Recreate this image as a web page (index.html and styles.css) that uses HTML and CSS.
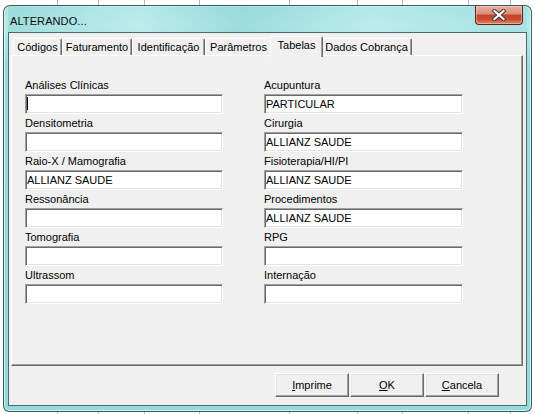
FILE: index.html
```html
<!DOCTYPE html>
<html>
<head>
<meta charset="utf-8">
<link rel="stylesheet" href="styles.css">
</head>
<body>
<div class="window">
  <div class="titlebar">
    <span class="title">ALTERANDO...</span>
    <div class="close">
      <svg width="14" height="12" viewBox="0 0 14 12">
        <path d="M2.5 2 L11.5 10 M11.5 2 L2.5 10" stroke="#3b3b3b" stroke-width="4.2" stroke-linecap="square" fill="none"/>
        <path d="M2.5 2 L11.5 10 M11.5 2 L2.5 10" stroke="#ffffff" stroke-width="2.2" stroke-linecap="square" fill="none"/>
      </svg>
    </div>
  </div>
  <div class="client">
    <div class="tabs">
      <div class="tab t1">Códigos</div>
      <div class="tab t2">Faturamento</div>
      <div class="tab t3">Identificação</div>
      <div class="tab t4">Parâmetros</div>
      <div class="tab t5 active">Tabelas</div>
      <div class="tab t6">Dados Cobrança</div>
    </div>
    <div class="panel">
      <div class="fields">
        <div class="field"><div class="label">Análises Clínicas</div><div class="input"><span class="caret"></span></div></div>
        <div class="field"><div class="label">Acupuntura</div><div class="input">PARTICULAR</div></div>
        <div class="field"><div class="label">Densitometria</div><div class="input"></div></div>
        <div class="field"><div class="label">Cirurgia</div><div class="input">ALLIANZ SAUDE</div></div>
        <div class="field"><div class="label">Raio-X / Mamografia</div><div class="input">ALLIANZ SAUDE</div></div>
        <div class="field"><div class="label">Fisioterapia/HI/PI</div><div class="input">ALLIANZ SAUDE</div></div>
        <div class="field"><div class="label">Ressonância</div><div class="input"></div></div>
        <div class="field"><div class="label">Procedimentos</div><div class="input">ALLIANZ SAUDE</div></div>
        <div class="field"><div class="label">Tomografia</div><div class="input"></div></div>
        <div class="field"><div class="label">RPG</div><div class="input"></div></div>
        <div class="field"><div class="label">Ultrassom</div><div class="input"></div></div>
        <div class="field"><div class="label">Internação</div><div class="input"></div></div>
      </div>
    </div>
    <div class="buttons">
      <div class="btn"><u>I</u>mprime</div>
      <div class="btn"><u>O</u>K</div>
      <div class="btn"><u>C</u>ancela</div>
    </div>
  </div>
</div>
</body>
</html>
```

FILE: styles.css
```css
html, body {
  margin: 0;
  padding: 0;
}
body {
  width: 535px;
  height: 414px;
  overflow: hidden;
  background-color: #ffffff;
  background-image:
    linear-gradient(to right, transparent 57px, #b8b8b8 57px, #b8b8b8 58px, transparent 58px),
    linear-gradient(to right, transparent 98px, #b8b8b8 98px, #b8b8b8 99px, transparent 99px),
    linear-gradient(to right, transparent 144px, #b8b8b8 144px, #b8b8b8 145px, transparent 145px),
    linear-gradient(to right, transparent 199px, #b8b8b8 199px, #b8b8b8 200px, transparent 200px),
    linear-gradient(to right, transparent 289px, #b8b8b8 289px, #b8b8b8 290px, transparent 290px),
    linear-gradient(to right, transparent 357px, #b8b8b8 357px, #b8b8b8 358px, transparent 358px),
    linear-gradient(to right, transparent 402px, #b8b8b8 402px, #b8b8b8 403px, transparent 403px),
    linear-gradient(to right, transparent 468px, #b8b8b8 468px, #b8b8b8 469px, transparent 469px),
    linear-gradient(to right, transparent 510px, #b8b8b8 510px, #b8b8b8 511px, transparent 511px);
  font-family: "Liberation Sans", Arial, sans-serif;
  font-size: 11px;
  color: #000;
  padding-top: 5px;
  padding-left: 3px;
  box-sizing: border-box;
}

.window {
  box-sizing: border-box;
  width: 529px;
  height: 407px;
  border: 1px solid rgba(20, 50, 55, 0.75);
  border-radius: 7px 7px 6px 6px;
  padding: 0 4px 5px 4px;
  background: linear-gradient(to bottom, #a9e4e4 0px, #b6eaea 20px, #98dcdc 60px, #94dada 100%);
  box-shadow: inset 0 0 0 1px rgba(255, 255, 255, 0.55);
}

.titlebar {
  height: 26px;
  display: flex;
  justify-content: space-between;
  align-items: flex-start;
  background: linear-gradient(to right, rgba(140, 210, 210, 0.5) 0%, rgba(200, 240, 240, 0.4) 25%, rgba(130, 205, 205, 0.45) 45%, rgba(195, 240, 240, 0.4) 70%, rgba(150, 215, 215, 0.4) 100%);
}

.title {
  padding-top: 9px;
  padding-left: 2px;
  font-size: 11px;
  line-height: 13px;
  color: #0a0a0a;
  letter-spacing: 0.1px;
}

.close {
  box-sizing: border-box;
  width: 48px;
  height: 19px;
  margin-right: 4px;
  border: 1px solid #5c2418;
  border-top: none;
  border-radius: 0 0 4px 4px;
  background: linear-gradient(to bottom, #eab1a2 0%, #db8a76 45%, #c4432b 50%, #c94c33 75%, #de8b70 100%);
  box-shadow: inset 0 0 0 1px rgba(255, 220, 210, 0.45);
  display: flex;
  align-items: center;
  justify-content: center;
}

.client {
  box-sizing: border-box;
  width: 519px;
  border: 1px solid #4b6a6a;
  background: #f0f0f0;
  padding-bottom: 8px;
}

.tabs {
  display: flex;
  align-items: flex-end;
  height: 19px;
  margin-top: 3px;
  padding-left: 4px;
}

.tab {
  box-sizing: border-box;
  height: 17px;
  border-top: 1px solid #ffffff;
  border-left: 1px solid #ffffff;
  border-right: 1px solid #696969;
  box-shadow: inset -1px 0 0 #a0a0a0;
  border-radius: 2px 2px 0 0;
  background: #f0f0f0;
  text-align: center;
  padding-top: 2px;
  line-height: 13px;
  white-space: nowrap;
}

.t1 { width: 49px; }
.t2 { width: 70px; }
.t3 { width: 73px; }
.t4 { width: 67px; }
.t5 { width: 53px; }
.t6 { width: 91px; }

.tab.active {
  height: 21px;
  margin: 0 -2px -2px -2px;
  padding-top: 2px;
  padding-bottom: 4px;
  position: relative;
  z-index: 1;
}

.panel {
  box-sizing: border-box;
  width: 512px;
  height: 311px;
  margin-left: 2px;
  border-top: 1px solid #ffffff;
  border-left: 1px solid #ffffff;
  border-right: 1px solid #696969;
  border-bottom: 1px solid #696969;
  box-shadow: inset -1px -1px 0 #a0a0a0;
  padding: 23px 0 0 13px;
}

.fields {
  display: grid;
  grid-template-columns: 198px 199px;
  column-gap: 41px;
  row-gap: 3px;
}

.field {
  display: flex;
  flex-direction: column;
  gap: 2px;
}

.label {
  height: 13px;
  line-height: 13px;
  white-space: nowrap;
}

.input {
  box-sizing: border-box;
  height: 20px;
  background: #ffffff;
  border: 1px solid;
  border-color: #a0a0a0 #ffffff #ffffff #a0a0a0;
  box-shadow: inset 1px 1px 0 #696969, inset -1px -1px 0 #e3e3e3;
  padding: 1px 0 0 1px;
  line-height: 17px;
  white-space: nowrap;
  overflow: hidden;
}

.caret {
  display: block;
  width: 1px;
  height: 13px;
  margin-top: 1px;
  background: #000;
}

.buttons {
  display: flex;
  justify-content: flex-end;
  gap: 1px;
  margin-top: 7px;
  padding-right: 27px;
}

.btn {
  box-sizing: border-box;
  width: 74px;
  height: 24px;
  background: #f0f0f0;
  border-top: 1px solid #ffffff;
  border-left: 1px solid #ffffff;
  border-right: 1px solid #696969;
  border-bottom: 1px solid #696969;
  box-shadow: inset -1px -1px 0 #a0a0a0, inset 1px 1px 0 #e3e3e3;
  text-align: center;
  line-height: 22px;
}

.btn u {
  text-decoration: underline;
  text-underline-offset: 1px;
}
```
